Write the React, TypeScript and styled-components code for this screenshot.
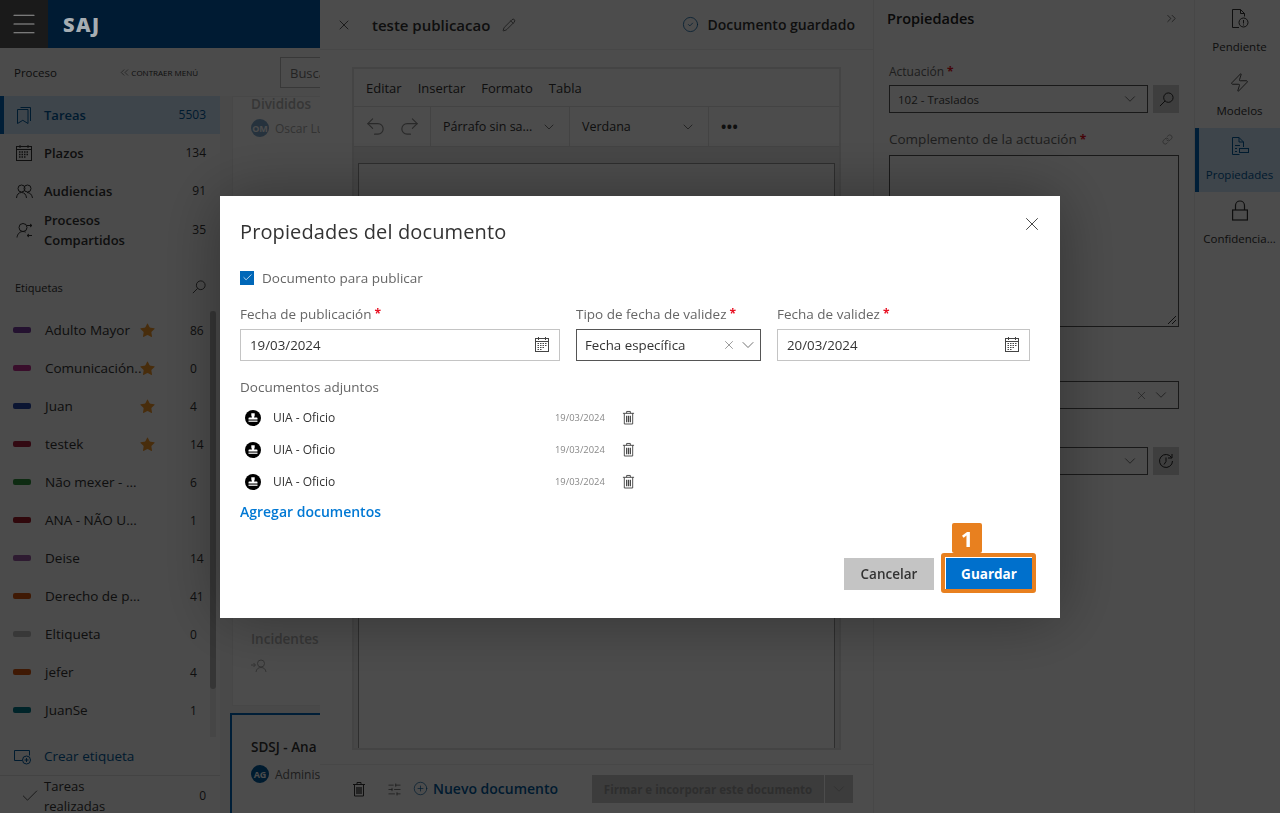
import styled, { createGlobalStyle } from 'styled-components'
import {
  Check,
  ChevronDown,
  ChevronsLeft,
  ChevronsRight,
  CircleCheck,
  CirclePlus,
  Link,
  Menu,
  Pencil,
  Redo2,
  SlidersHorizontal,
  Star,
  Undo2,
  X,
  Zap,
} from 'lucide-react'

const GlobalStyle = createGlobalStyle`
  html, body {
    margin: 0;
    height: 100%;
    overflow: hidden;
    font-family: "Open Sans", "Noto Sans", sans-serif;
    color: #333;
    background: #fff;
  }
  * { box-sizing: border-box; }
`

const Page = styled.div`
  display: grid;
  grid-template-columns: 320px 553px 321px 86px;
  height: 100vh;
  overflow: hidden;
`

/* left column */
const LeftColumn = styled.div`
  display: flex;
  flex-direction: column;
  min-height: 0;
  overflow: hidden;
`

// the bar stays above the dimmed layer, its colours are the dimmed ones
const TopBar = styled.header`
  position: relative;
  z-index: 2;
  height: 48px;
  flex: none;
  display: flex;
  align-items: center;
  background: #001b33;
`

const MenuButton = styled.div`
  width: 48px;
  height: 48px;
  display: flex;
  align-items: center;
  justify-content: center;
  background: #1a1a1a;
  color: #999;
`

const Brand = styled.div`
  margin-left: 15px;
  font-size: 20px;
  font-weight: 800;
  letter-spacing: 1.5px;
  color: #a6adb2;
`

const LeftBody = styled.div`
  flex: 1;
  min-height: 0;
  display: flex;
`

const Sidebar = styled.aside`
  width: 220px;
  flex: none;
  display: flex;
  flex-direction: column;
  background: #fafafa;
  overflow: hidden;
`

const ProcessHead = styled.div`
  height: 48px;
  flex: none;
  display: flex;
  align-items: center;
  justify-content: space-between;
  padding: 0 22px 0 14px;
  font-size: 11.5px;
`

const Collapse = styled.span`
  display: flex;
  align-items: center;
  gap: 0;
  font-size: 8px;
  text-transform: uppercase;
`

const NavRow = styled.div<{ $active?: boolean; $tall?: boolean }>`
  height: 38px;
  flex: none;
  display: grid;
  grid-template-columns: 28px 1fr auto;
  align-items: center;
  padding: 0 14px ${(p) => (p.$tall ? 4 : 0)}px ${(p) => (p.$active ? 12 : 16)}px;
  border-left: ${(p) => (p.$active ? '4px solid #0067b8' : 'none')};
  background: ${(p) => (p.$active ? '#d0e6fa' : 'transparent')};
  color: ${(p) => (p.$active ? '#005a9e' : '#333')};
  font-size: 13px;
  font-weight: 600;
  line-height: 20px;
`

const NavCount = styled.span`
  font-size: 12px;
  font-weight: 500;
`

const TagsHead = styled.div`
  height: 24px;
  flex: none;
  margin-top: 27px;
  display: flex;
  align-items: center;
  justify-content: space-between;
  padding: 0 14px 0 15px;
  font-size: 11px;
`

const TagList = styled.div`
  position: relative;
  height: 426px;
  flex: none;
  margin-top: 12px;
  overflow: hidden;
`

const TagRow = styled.div`
  height: 38px;
  display: grid;
  grid-template-columns: 32px 93px 52px auto;
  align-items: center;
  padding-left: 13px;
  font-size: 13.5px;
`

const Swatch = styled.span<{ $color: string }>`
  width: 18px;
  height: 6px;
  border-radius: 2px;
  background: ${(p) => p.$color};
`

const TagName = styled.span`
  white-space: nowrap;
`

const StarSlot = styled.span`
  display: flex;
  margin-left: 1px;
  color: #f0962a;
`

const TagCount = styled.span`
  font-size: 12px;
`

const ScrollTrack = styled.div`
  position: absolute;
  top: 0;
  bottom: 0;
  right: 4px;
  width: 6px;
  background: #ececec;
`

const ScrollThumb = styled.div`
  height: 378px;
  border-radius: 3px;
  background: #b4b4b4;
`

const CreateTag = styled.div`
  height: 39px;
  flex: none;
  display: flex;
  align-items: center;
  gap: 13px;
  padding: 0 14px;
  border-bottom: 1px solid #e0e0e0;
  color: #005a9e;
  font-size: 13.5px;
`

const DoneRow = styled.div`
  flex: none;
  display: grid;
  grid-template-columns: 24px 1fr auto;
  align-items: center;
  margin-top: -1px;
  padding: 0 14px 0 20px;
  font-size: 13px;
  line-height: 20px;
  height: 41px;
`

const ListPane = styled.section`
  flex: 1;
  min-width: 0;
  display: flex;
  flex-direction: column;
  overflow: hidden;
  background: #f6f6f6;
`

const SearchRow = styled.div`
  height: 48px;
  flex: none;
  padding: 9px 0 0 60px;
  background: #fafafa;
`

const SearchBox = styled.div`
  width: 200px;
  height: 31px;
  padding: 0 9px;
  display: flex;
  align-items: center;
  border: 1px solid #bbb;
  background: #fff;
  color: #777;
  font-size: 13px;
`

const TaskCard = styled.div<{ $selected?: boolean }>`
  flex: none;
  width: 200px;
  margin-left: ${(p) => (p.$selected ? 10 : 12)}px;
  background: #fff;
  white-space: nowrap;
  font-size: 12px;
  border: ${(p) => (p.$selected ? '2px solid #0067b8' : '1px solid #eee')};
`

const SplitCard = styled(TaskCard)`
  height: 610px;
  display: flex;
  flex-direction: column;
  justify-content: space-between;
  padding: 0 0 28px 18px;
  color: #aaa;
`

const SelectedCard = styled(TaskCard)`
  height: 110px;
  margin-top: 7px;
  padding: 25px 0 0 19px;
  color: #666;
`

const CardTitle = styled.div<{ $strong?: boolean; $gap?: number }>`
  font-size: 13.5px;
  line-height: 14px;
  font-weight: 600;
  color: ${(p) => (p.$strong ? '#333' : '#b5b5b5')};
  margin-bottom: ${(p) => p.$gap ?? 8}px;
`

const Person = styled.div`
  display: flex;
  align-items: center;
  gap: 6px;
`

const Avatar = styled.span<{ $color: string }>`
  width: 18px;
  height: 18px;
  border-radius: 50%;
  display: flex;
  align-items: center;
  justify-content: center;
  background: ${(p) => p.$color};
  color: #fff;
  font-size: 9px;
  font-weight: 700;
`

/* editor column */
const EditorColumn = styled.main`
  display: flex;
  flex-direction: column;
  min-height: 0;
  background: #fff;
`

const EditorHead = styled.div`
  height: 50px;
  flex: none;
  display: flex;
  align-items: center;
  padding: 0 18px 0 16px;
  border-bottom: 1px solid #eee;
`

const DocTitle = styled.span`
  margin: 0 12px 0 20px;
  font-size: 15px;
  font-weight: 600;
`

const SavedState = styled.span`
  margin-left: auto;
  display: flex;
  align-items: center;
  gap: 8px;
  font-size: 14px;
  font-weight: 600;
  color: #333;
`

const EditorBody = styled.div`
  flex: 1;
  min-height: 0;
  padding: 17px 32px 14px;
`

const EditorBox = styled.div`
  height: 100%;
  display: flex;
  flex-direction: column;
  border: 2px solid #e3e3e3;
  background: #ededed;
`

const MenuBar = styled.div`
  height: 38px;
  flex: none;
  display: flex;
  align-items: center;
  gap: 16px;
  padding: 0 12px;
  background: #fff;
  border-bottom: 1px solid #e0e0e0;
  font-size: 13px;
`

const ToolBar = styled.div`
  height: 40px;
  flex: none;
  display: grid;
  grid-template-columns: 77px 139px 139px 1fr;
  background: #fff;
  border-bottom: 1px solid #e0e0e0;
  font-size: 12.5px;
`

const ToolGroup = styled.div`
  display: flex;
  align-items: center;
  justify-content: space-between;
  padding: 0 12px;
  border-right: 1px solid #e0e0e0;
  color: #333;

  &:last-child {
    border-right: none;
    font-size: 14px;
    font-weight: 700;
    letter-spacing: 0.5px;
    justify-content: flex-start;
  }
`

const UndoGroup = styled(ToolGroup)`
  padding: 0 9px 0 10px;
  color: #8a8a8a;
`

const SheetArea = styled.div`
  flex: 1;
  min-height: 0;
  padding: 16px 4px 0;
`

const Sheet = styled.div`
  height: 100%;
  background: #fff;
  border: 1px solid #9a9a9a;
  border-bottom: none;
`

const EditorFoot = styled.div`
  height: 49px;
  flex: none;
  display: flex;
  align-items: center;
  padding: 0 20px 0 32px;
  border-top: 1px solid #eee;
`

const FootIcons = styled.div`
  display: flex;
  align-items: center;
  gap: 21px;
  margin-right: 11px;
`

const NewDoc = styled.span`
  display: flex;
  align-items: center;
  gap: 5px;
  padding-bottom: 2px;
  color: #005a9e;
  font-size: 14px;
  font-weight: 600;
`

const SignGroup = styled.div`
  margin-left: auto;
  display: flex;
  gap: 1px;
`

const SignButton = styled.div`
  width: 232px;
  height: 28px;
  display: flex;
  align-items: center;
  justify-content: center;
  background: #c9c9c9;
  color: #9a9a9a;
  font-size: 11.5px;
  font-weight: 700;
`

const SignCaret = styled.div`
  width: 28px;
  height: 28px;
  display: flex;
  align-items: center;
  justify-content: center;
  background: #c9c9c9;
  color: #9a9a9a;
`

/* properties column */
const PropsColumn = styled.aside`
  display: flex;
  flex-direction: column;
  padding: 0 15px;
  background: #fff;
  border-left: 1px solid #eee;
`

const PropsHead = styled.div`
  height: 36px;
  flex: none;
  display: flex;
  align-items: center;
  justify-content: space-between;
  margin-left: -2px;
  font-size: 14.5px;
  font-weight: 600;
  color: #222;
`

const PropLabel = styled.div<{ $large?: boolean }>`
  display: flex;
  align-items: center;
  height: ${(p) => (p.$large ? 20 : 16)}px;
  margin-top: ${(p) => (p.$large ? 16 : 27)}px;
  margin-bottom: 6px;
  font-size: ${(p) => (p.$large ? 13.5 : 12)}px;
  color: #666;
`

const Required = styled.span`
  margin-left: 3px;
  color: #e81123;
  font-size: 12px;
  font-weight: 700;
`

const LinkSlot = styled.span`
  display: flex;
  margin-left: auto;
  margin-right: 6px;
  color: #666;
`

const SelectRow = styled.div`
  display: flex;
  gap: 5px;
`

const PropSelect = styled.div<{ $top?: number }>`
  flex: 1;
  height: 28px;
  margin-top: ${(p) => p.$top ?? 0}px;
  display: flex;
  align-items: center;
  justify-content: flex-end;
  gap: 4px;
  padding: 0 8px;
  border: 1px solid #555;
  background: #fff;
  font-size: 11.5px;
  color: #444;
`

const SelectValue = styled.span`
  margin-right: auto;
`

const SquareButton = styled.div<{ $top?: number }>`
  width: 26px;
  height: 28px;
  margin-top: ${(p) => p.$top ?? 0}px;
  display: flex;
  align-items: center;
  justify-content: center;
  background: #cfcfcf;
  color: #222;
`

const TextArea = styled.div`
  position: relative;
  height: 172px;
  border: 1px solid #555;
  background: #fff;
`

const ResizeGrip = styled.svg`
  position: absolute;
  right: 1px;
  bottom: 1px;
`

/* right rail */
const Rail = styled.nav`
  display: flex;
  flex-direction: column;
  border-left: 1px solid #eee;
  background: #fff;
`

const RailItem = styled.div<{ $active?: boolean }>`
  height: 64px;
  flex: none;
  display: flex;
  flex-direction: column;
  align-items: center;
  padding-top: 7px;
  gap: 9px;
  border-left: ${(p) => (p.$active ? '4px solid #0067b8' : 'none')};
  margin-left: ${(p) => (p.$active ? 0 : 4)}px;
  background: ${(p) => (p.$active ? '#d0e6fa' : 'transparent')};
  color: ${(p) => (p.$active ? '#005a9e' : '#333')};
  font-size: 11.5px;
  line-height: 16px;
  white-space: nowrap;
`

const RailIcon = styled.span`
  height: 23px;
  display: flex;
  align-items: center;
`

/* modal */
const Overlay = styled.div`
  position: fixed;
  inset: 0;
  z-index: 1;
  display: flex;
  align-items: center;
  justify-content: center;
  background: rgba(0, 0, 0, 0.7);
`

const Modal = styled.div`
  position: relative;
  width: 840px;
  height: 422px;
  padding: 21px 30px 28px 20px;
  display: flex;
  flex-direction: column;
  background: #fff;
  box-shadow: 0 0 60px rgba(0, 0, 0, 0.35);
`

const ModalTitle = styled.h2`
  margin: 0;
  height: 30px;
  font-size: 20px;
  line-height: 30px;
  letter-spacing: 0.12px;
  font-weight: 400;
  color: #333;
`

const CloseButton = styled.span`
  position: absolute;
  top: 17px;
  right: 17px;
  display: flex;
  color: #222;
`

const CheckRow = styled.label`
  display: flex;
  align-items: center;
  gap: 8px;
  margin-top: 21px;
  height: 20px;
  font-size: 13.5px;
  color: #666;
`

const CheckBox = styled.span`
  width: 14px;
  height: 14px;
  display: flex;
  align-items: center;
  justify-content: center;
  background: #0067b8;
  color: #fff;
`

const FieldGrid = styled.div`
  display: grid;
  grid-template-columns: 320px 185px 253px;
  column-gap: 16px;
  margin-top: 17px;
`

const FieldLabel = styled.div`
  height: 18px;
  margin-bottom: 6px;
  display: flex;
  align-items: center;
  font-size: 13.5px;
  color: #666;
`

const InputBox = styled.div<{ $strong?: boolean }>`
  height: 32px;
  display: flex;
  align-items: center;
  justify-content: space-between;
  gap: 6px;
  padding: 0 10px 0 ${(p) => (p.$strong ? 8 : 9)}px;
  border: 1px solid ${(p) => (p.$strong ? '#555' : '#c4c4c4')};
  background: #fff;
  font-size: 13.3px;
  color: #333;
`

const StrongActions = styled.span`
  display: flex;
  align-items: center;
  gap: 2px;
  margin-right: -8px;
  color: #555;
`

const AttachHead = styled.div`
  margin-top: 17px;
  height: 18px;
  display: flex;
  align-items: center;
  font-size: 13.5px;
  color: #666;
`

const AttachList = styled.div`
  margin-top: 6px;
`

const AttachRow = styled.div`
  height: 32px;
  width: 400px;
  display: grid;
  grid-template-columns: 28px 282px 50px 1fr;
  align-items: center;
  padding-left: 5px;
  font-size: 12px;
  color: #333;
`

const AttachDate = styled.span`
  font-size: 9.4px;
  color: #888;
`

const TrashSlot = styled.span`
  display: flex;
  justify-content: center;
  margin-left: 11px;
  color: #444;
`

const AddDocs = styled.div`
  margin-top: 4px;
  font-size: 14px;
  font-weight: 600;
  color: #0078d4;
`

const ModalActions = styled.div`
  margin-top: auto;
  margin-right: -2px;
  display: flex;
  justify-content: flex-end;
  gap: 12px;
`

const CancelButton = styled.div`
  width: 90px;
  height: 32px;
  display: flex;
  align-items: center;
  justify-content: center;
  background: #c4c4c4;
  color: #333;
  font-size: 13.5px;
  font-weight: 600;
`

const SaveButton = styled.div`
  position: relative;
  width: 86px;
  height: 32px;
  display: flex;
  align-items: center;
  justify-content: center;
  background: #0070cc;
  color: #fff;
  font-size: 13.5px;
  font-weight: 700;
`

const Highlight = styled.span`
  position: absolute;
  inset: -5px -4px -3px -5px;
  border: 4px solid #e8801f;
  border-radius: 3px;
  pointer-events: none;
`

const StepBadge = styled.span`
  position: absolute;
  left: 6px;
  top: -35px;
  width: 30px;
  height: 30px;
  display: flex;
  align-items: center;
  justify-content: center;
  border-radius: 2px;
  background: #e8801f;
  color: #fff;
  font-size: 22px;
  font-weight: 700;
`

/* small hand-drawn icons */
const CalendarIcon = () => (
  <svg width="14" height="15" viewBox="0 0 14 15" fill="none" stroke="#444">
    <rect x="0.5" y="1.5" width="13" height="13" />
    <path d="M0.5 4.5h13M3.5 0v3M10.5 0v3" />
    <path
      d="M2.5 6.500h1.500M5 6.500h1.500M7.500 6.500h1.500M10 6.500h1.500M2.500 8.500h1.500M5 8.500h1.500M7.500 8.500h1.500M10 8.500h1.500M2.500 10.500h1.500M5 10.500h1.500M7.500 10.500h1.500M2.500 12.500h1.500M5 12.500h1.500"
      strokeWidth="1.2"
    />
  </svg>
)

const MagnifierIcon = ({ size = 14 }: { size?: number }) => (
  <svg width={size} height={size} viewBox="0 0 16 16" fill="none" stroke="currentColor">
    <circle cx="10" cy="6" r="5" />
    <path d="M6.500 9.500L1 15" />
  </svg>
)

const StampIcon = () => (
  <svg width="16" height="16" viewBox="0 0 16 16">
    <circle cx="8" cy="8" r="8" fill="#000" />
    <path d="M6.300 3.200h3.400v2.200L9 7.600h2.800c.4 0 .7.3.7.7v1.200h-9V8.300c0-.4.3-.7.7-.7H7l-.7-2.200z" fill="#fff" />
    <rect x="3.500" y="10.600" width="9" height="1.200" fill="#fff" />
  </svg>
)

const TrashIcon = ({ size = 14 }: { size?: number }) => (
  <svg width={size} height={size + 2} viewBox="0 0 14 16" fill="none" stroke="currentColor">
    <path d="M1 3.500h12M5 3.500V1.500h4v2M2.500 3.500v11.500h9V3.500" />
    <path d="M5 6v7M7 6v7M9 6v7" strokeWidth="1.300" />
  </svg>
)

const NotebookIcon = () => (
  <svg width="16" height="17" viewBox="0 0 16 17" fill="none" stroke="currentColor">
    <path d="M4.500 0.500h10v13.500M1.500 2.500h10.500v14l-5.200-3.200L1.500 16.500z" />
  </svg>
)

const AgendaIcon = () => (
  <svg width="16" height="16" viewBox="0 0 16 16" fill="none" stroke="currentColor">
    <rect x="0.500" y="1.500" width="15" height="14" />
    <path d="M0.500 4.500h15M4 0v3M12 0v3" />
    <path d="M3 7h10M3 9.500h10M3 12h7" strokeWidth="1.500" strokeDasharray="1.500 1" />
  </svg>
)

const PeopleIcon = () => (
  <svg width="17" height="15" viewBox="0 0 17 15" fill="none" stroke="currentColor">
    <circle cx="5.500" cy="4.500" r="3.500" />
    <circle cx="11.500" cy="4.500" r="3.500" />
    <path d="M.5 14c.3-3.300 2-5.500 5-5.500s4.700 2.200 5 5.500M11 8.500c3 0 5 2.200 5.500 5.500" />
  </svg>
)

const SharedIcon = () => (
  <svg width="17" height="17" viewBox="0 0 17 17" fill="none" stroke="currentColor">
    <circle cx="7" cy="5.500" r="4" />
    <path d="M1 15.500c.4-3.400 2.600-6 6-6 1 0 1.800.2 2.600.7" />
    <path d="M11 3.500h5l-2-1.500M16 3.500l-2 1.500M16 13.500h-5l2-1.500M11 13.500l2 1.500" />
  </svg>
)

const TagAddIcon = () => (
  <svg width="17" height="17" viewBox="0 0 17 17" fill="none" stroke="currentColor">
    <path d="M8 12.500H.5V2.500h15v5" />
    <circle cx="12.500" cy="12" r="4" />
    <path d="M12.500 10v4M10.500 12h4" />
  </svg>
)

const PendingIcon = () => (
  <svg width="18" height="20" viewBox="0 0 18 20" fill="none" stroke="currentColor">
    <path d="M8 18.500H1.500V.5h8l4 4v3M9.500.5v4h4" />
    <circle cx="12.500" cy="13.500" r="4.500" />
    <path d="M12.500 11v3.500M12.500 15.500v1" />
  </svg>
)

const PropsIcon = () => (
  <svg width="18" height="19" viewBox="0 0 18 19" fill="none" stroke="currentColor">
    <path d="M12.500 10V5l-4.500-4.500H1.500v17h7M8 .5v4.500h4.500" />
    <path d="M4 8.500h5M4 11.500h2M4 14.500h2" />
    <rect x="8.500" y="11.500" width="9" height="4" />
  </svg>
)

const PadlockIcon = () => (
  <svg width="16" height="21" viewBox="0 0 16 21" fill="none" stroke="currentColor" strokeWidth="1.200">
    <path d="M3.500 10V5.500a4.500 4.500 0 0 1 9 0V10" />
    <rect x="0.600" y="10" width="14.800" height="10" />
  </svg>
)

const ClockRefreshIcon = () => (
  <svg width="16" height="16" viewBox="0 0 16 16" fill="none" stroke="currentColor">
    <path d="M13.500 4.500a6.500 6.500 0 1 0 1 3.500" />
    <path d="M14 1v4h-4M8 4.500v4l-2 3" />
  </svg>
)

const IncidentIcon = () => (
  <svg width="16" height="14" viewBox="0 0 16 14" fill="none" stroke="#aaa">
    <circle cx="10" cy="4.500" r="3.500" />
    <path d="M5 13c.4-3 2.200-4.500 5-4.500s4.600 1.500 5 4.500M0 6h4M2.500 4l2 2-2 2" />
  </svg>
)

const tags = [
  { name: 'Adulto Mayor', color: '#7a3fa0', count: 86, star: true },
  { name: 'Comunicación..', color: '#c0308f', count: 0, star: true },
  { name: 'Juan', color: '#2646a8', count: 4, star: true },
  { name: 'testek', color: '#a81f3c', count: 14, star: true },
  { name: 'Não mexer - ...', color: '#2f8f3c', count: 6 },
  { name: 'ANA - NÃO U...', color: '#a01c2a', count: 1 },
  { name: 'Deise', color: '#9c5aa5', count: 14 },
  { name: 'Derecho de p...', color: '#d2560f', count: 41 },
  { name: 'Eltiqueta', color: '#bdbdbd', count: 0 },
  { name: 'jefer', color: '#d2560f', count: 4 },
  { name: 'JuanSe', color: '#00788a', count: 1 },
]

const attachments = ['UIA - Oficio', 'UIA - Oficio', 'UIA - Oficio']

export default function App() {
  return (
    <>
      <GlobalStyle />
      <Page>
        <LeftColumn>
          <TopBar>
            <MenuButton>
              <Menu size={30} strokeWidth={0.9} />
            </MenuButton>
            <Brand>SAJ</Brand>
          </TopBar>
          <LeftBody>
            <Sidebar>
              <ProcessHead>
                Proceso
                <Collapse>
                  <ChevronsLeft size={13} strokeWidth={1} />
                  Contraer menú
                </Collapse>
              </ProcessHead>
              <NavRow $active>
                <NotebookIcon />
                Tareas
                <NavCount>5503</NavCount>
              </NavRow>
              <NavRow>
                <AgendaIcon />
                Plazos
                <NavCount>134</NavCount>
              </NavRow>
              <NavRow>
                <PeopleIcon />
                Audiencias
                <NavCount>91</NavCount>
              </NavRow>
              <NavRow $tall>
                <SharedIcon />
                <span>
                  Procesos
                  <br />
                  Compartidos
                </span>
                <NavCount>35</NavCount>
              </NavRow>
              <TagsHead>
                Etiquetas
                <MagnifierIcon />
              </TagsHead>
              <TagList>
                {tags.map((t) => (
                  <TagRow key={t.name}>
                    <Swatch $color={t.color} />
                    <TagName>{t.name}</TagName>
                    <StarSlot>{t.star && <Star size={17} fill="currentColor" strokeWidth={0} />}</StarSlot>
                    <TagCount>{t.count}</TagCount>
                  </TagRow>
                ))}
                <ScrollTrack>
                  <ScrollThumb />
                </ScrollTrack>
              </TagList>
              <CreateTag>
                <TagAddIcon />
                Crear etiqueta
              </CreateTag>
              <DoneRow>
                <Check size={20} strokeWidth={1} />
                <span>
                  Tareas
                  <br />
                  realizadas
                </span>
                <NavCount>0</NavCount>
              </DoneRow>
            </Sidebar>
            <ListPane>
              <SearchRow>
                <SearchBox>Buscar</SearchBox>
              </SearchRow>
              <SplitCard>
                <div>
                  <CardTitle>Divididos</CardTitle>
                  <Person>
                    <Avatar $color="#7fa8cc">OM</Avatar>
                    Oscar Luis
                  </Person>
                </div>
                <div>
                  <CardTitle $gap={13}>Incidentes</CardTitle>
                  <IncidentIcon />
                </div>
              </SplitCard>
              <SelectedCard $selected>
                <CardTitle $strong $gap={11}>
                  SDSJ - Ana
                </CardTitle>
                <Person>
                  <Avatar $color="#005a9e">AG</Avatar>
                  Administrador
                </Person>
              </SelectedCard>
            </ListPane>
          </LeftBody>
        </LeftColumn>

        <EditorColumn>
          <EditorHead>
            <X size={16} strokeWidth={1.2} />
            <DocTitle>teste publicacao</DocTitle>
            <Pencil size={14} strokeWidth={1.2} />
            <SavedState>
              <CircleCheck size={17} strokeWidth={1.1} color="#005a9e" />
              Documento guardado
            </SavedState>
          </EditorHead>
          <EditorBody>
            <EditorBox>
              <MenuBar>
                <span>Editar</span>
                <span>Insertar</span>
                <span>Formato</span>
                <span>Tabla</span>
              </MenuBar>
              <ToolBar>
                <UndoGroup>
                  <Undo2 size={23} strokeWidth={1.2} />
                  <Redo2 size={23} strokeWidth={1.2} />
                </UndoGroup>
                <ToolGroup>
                  Párrafo sin sa...
                  <ChevronDown size={16} strokeWidth={1} />
                </ToolGroup>
                <ToolGroup>
                  Verdana
                  <ChevronDown size={16} strokeWidth={1} />
                </ToolGroup>
                <ToolGroup>•••</ToolGroup>
              </ToolBar>
              <SheetArea>
                <Sheet />
              </SheetArea>
            </EditorBox>
          </EditorBody>
          <EditorFoot>
            <FootIcons>
              <TrashIcon />
              <SlidersHorizontal size={15} strokeWidth={1} />
            </FootIcons>
            <NewDoc>
              <CirclePlus size={15} strokeWidth={1.1} />
              Nuevo documento
            </NewDoc>
            <SignGroup>
              <SignButton>Firmar e incorporar este documento</SignButton>
              <SignCaret>
                <ChevronDown size={18} strokeWidth={1} />
              </SignCaret>
            </SignGroup>
          </EditorFoot>
        </EditorColumn>

        <PropsColumn>
          <PropsHead>
            Propiedades
            <ChevronsRight size={15} strokeWidth={1} />
          </PropsHead>
          <PropLabel>
            Actuación<Required>*</Required>
          </PropLabel>
          <SelectRow>
            <PropSelect>
              <SelectValue>102 - Traslados</SelectValue>
              <ChevronDown size={18} strokeWidth={1} />
            </PropSelect>
            <SquareButton>
              <MagnifierIcon size={15} />
            </SquareButton>
          </SelectRow>
          <PropLabel $large>
            Complemento de la actuación<Required>*</Required>
            <LinkSlot>
              <Link size={11} strokeWidth={1.2} />
            </LinkSlot>
          </PropLabel>
          <TextArea>
            <ResizeGrip width="10" height="10" viewBox="0 0 10 10" stroke="#333">
              <path d="M9 1L1 9M9 5L5 9" />
            </ResizeGrip>
          </TextArea>
          <SelectRow>
            <PropSelect $top={54}>
              <X size={13} strokeWidth={1} />
              <ChevronDown size={18} strokeWidth={1} />
            </PropSelect>
          </SelectRow>
          <SelectRow>
            <PropSelect $top={38}>
              <ChevronDown size={18} strokeWidth={1} />
            </PropSelect>
            <SquareButton $top={38}>
              <ClockRefreshIcon />
            </SquareButton>
          </SelectRow>
        </PropsColumn>

        <Rail>
          <RailItem>
            <RailIcon>
              <PendingIcon />
            </RailIcon>
            Pendiente
          </RailItem>
          <RailItem>
            <RailIcon>
              <Zap size={21} strokeWidth={1} />
            </RailIcon>
            Modelos
          </RailItem>
          <RailItem $active>
            <RailIcon>
              <PropsIcon />
            </RailIcon>
            Propiedades
          </RailItem>
          <RailItem>
            <RailIcon>
              <PadlockIcon />
            </RailIcon>
            Confidencia...
          </RailItem>
        </Rail>
      </Page>

      <Overlay>
        <Modal>
          <CloseButton>
            <X size={22} strokeWidth={0.9} />
          </CloseButton>
          <ModalTitle>Propiedades del documento</ModalTitle>
          <CheckRow>
            <CheckBox>
              <Check size={11} strokeWidth={1.5} />
            </CheckBox>
            Documento para publicar
          </CheckRow>
          <FieldGrid>
            <div>
              <FieldLabel>
                Fecha de publicación<Required>*</Required>
              </FieldLabel>
              <InputBox>
                19/03/2024
                <CalendarIcon />
              </InputBox>
            </div>
            <div>
              <FieldLabel>
                Tipo de fecha de validez<Required>*</Required>
              </FieldLabel>
              <InputBox $strong>
                Fecha específica
                <StrongActions>
                  <X size={14} strokeWidth={1} />
                  <ChevronDown size={20} strokeWidth={1} />
                </StrongActions>
              </InputBox>
            </div>
            <div>
              <FieldLabel>
                Fecha de validez<Required>*</Required>
              </FieldLabel>
              <InputBox>
                20/03/2024
                <CalendarIcon />
              </InputBox>
            </div>
          </FieldGrid>
          <AttachHead>Documentos adjuntos</AttachHead>
          <AttachList>
            {attachments.map((name, i) => (
              <AttachRow key={i}>
                <StampIcon />
                {name}
                <AttachDate>19/03/2024</AttachDate>
                <TrashSlot>
                  <TrashIcon size={13} />
                </TrashSlot>
              </AttachRow>
            ))}
          </AttachList>
          <AddDocs>Agregar documentos</AddDocs>
          <ModalActions>
            <CancelButton>Cancelar</CancelButton>
            <SaveButton>
              Guardar
              <Highlight />
              <StepBadge>1</StepBadge>
            </SaveButton>
          </ModalActions>
        </Modal>
      </Overlay>
    </>
  )
}
